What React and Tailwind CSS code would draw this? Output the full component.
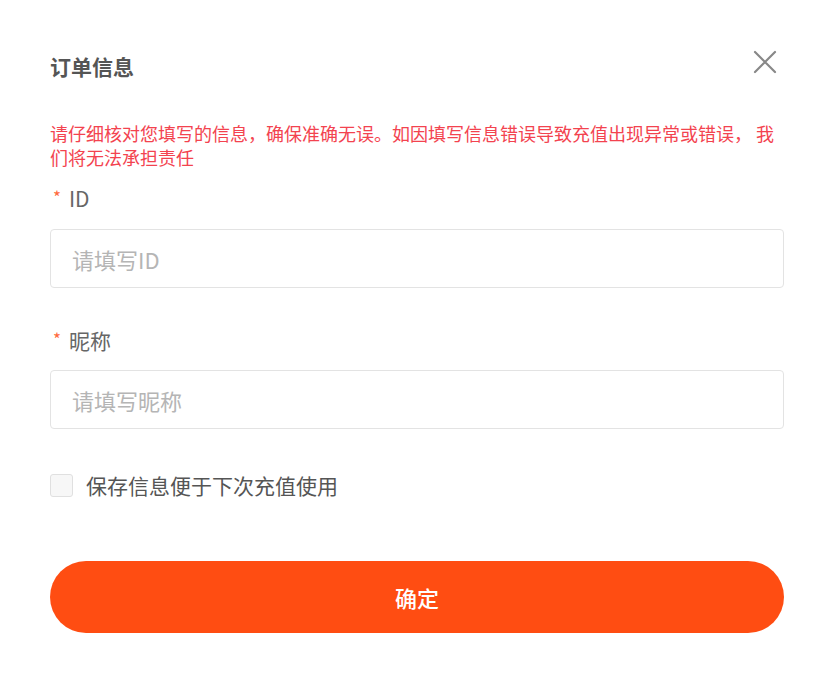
import React from 'react';

const font = { fontFamily: '"Noto Sans CJK SC", "Noto Sans", sans-serif' };

const App = () => {
    return (
        <div className="w-[815px] h-[684px] bg-white pl-[50px] pr-[31px] pt-[52px]" style={font}>
            <div className="flex items-center justify-between">
                <p className="text-[21px] leading-[28px] font-bold text-[#555]">订单信息</p>
                <svg width="24" height="24" viewBox="0 0 24 24" className="mr-[7px] -mt-[8px]">
                    <path d="M2 2 L22 22 M22 2 L2 22" stroke="#888" strokeWidth="2.2" strokeLinecap="round" />
                </svg>
            </div>
            <p className="mt-[41px] text-[18px] leading-[24px] text-[#f3434f]">
                请仔细核对您填写的信息，确保准确无误。如因填写信息错误导致充值出现异常或错误， 我
                <br />
                们将无法承担责任
            </p>

            <label className="mt-[15px] flex items-center text-[21px] leading-[28px] text-[#666]">
                <span className="text-[#ff6a3d] ml-[3px] mr-[8px] text-[17px] -mt-[3px]">*</span>ID
            </label>
            <input
                className="mt-[17px] w-full h-[59px] border border-[#e3e3e3] rounded-[4px] px-[21px] text-[22px] outline-none placeholder:text-[#b5b5b5]"
                placeholder="请填写ID"
            />

            <label className="mt-[38px] flex items-center text-[21px] leading-[28px] text-[#666]">
                <span className="text-[#ff6a3d] ml-[3px] mr-[8px] text-[17px] -mt-[3px]">*</span>昵称
            </label>
            <input
                className="mt-[16px] w-full h-[59px] border border-[#e3e3e3] rounded-[4px] px-[21px] text-[22px] outline-none placeholder:text-[#b5b5b5]"
                placeholder="请填写昵称"
            />

            <div className="mt-[44px] flex items-center gap-[13px]">
                <span className="w-[23px] h-[23px] rounded-[3px] border border-[#e0e0e0] bg-[#f7f7f7]" />
                <span className="text-[21px] leading-[24px] text-[#555]">保存信息便于下次充值使用</span>
            </div>

            <button className="mt-[64px] w-full h-[72px] rounded-full bg-[#ff4d12] text-white text-[22px] font-medium">
                确定
            </button>
        </div>
    );
};

export default App;
